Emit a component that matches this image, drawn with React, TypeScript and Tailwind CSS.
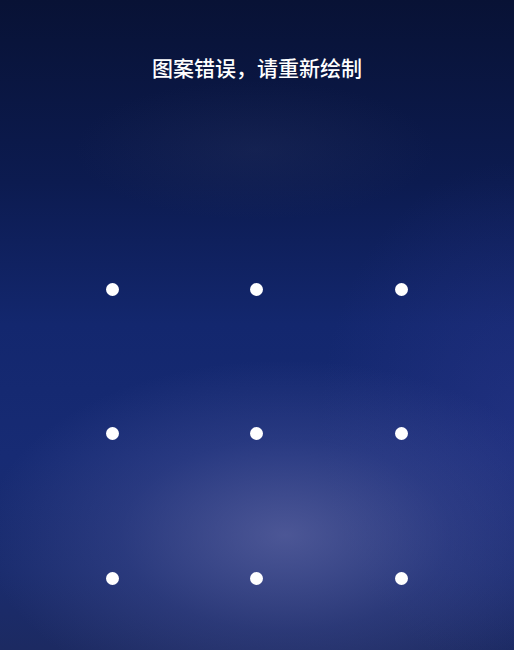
import React from "react";

export default function App() {
  const dots = Array.from({ length: 9 });
  return (
    <div
      className="w-full h-[650px] flex flex-col overflow-hidden bg-[radial-gradient(ellipse_300px_175px_at_285px_535px,rgba(110,115,175,0.6),rgba(80,90,160,0.3)_55%,transparent_100%),radial-gradient(ellipse_200px_260px_at_520px_420px,rgba(50,60,150,0.35),transparent_100%),radial-gradient(ellipse_180px_70px_at_255px_150px,rgba(55,65,105,0.2),transparent_100%),linear-gradient(to_bottom,#081235_0%,#0c1b50_28%,#13276e_50%,#172b74_70%,#1a2c6e_88%,#1c2a62_100%)]"
      style={{ fontFamily: '"Noto Sans CJK SC", "Noto Sans", sans-serif' }}
    >
      <div className="pt-[53px] h-[82px] text-center text-white text-[21px] leading-[29px] font-medium">
        图案错误，请重新绘制
      </div>
      <div className="mt-[135px] px-[40px] grid grid-cols-3 grid-rows-[repeat(3,144.5px)]">
        {dots.map((_, i) => (
          <div key={i} className="flex items-center justify-center">
            <div className="w-[13px] h-[13px] rounded-full bg-white" />
          </div>
        ))}
      </div>
    </div>
  );
}
